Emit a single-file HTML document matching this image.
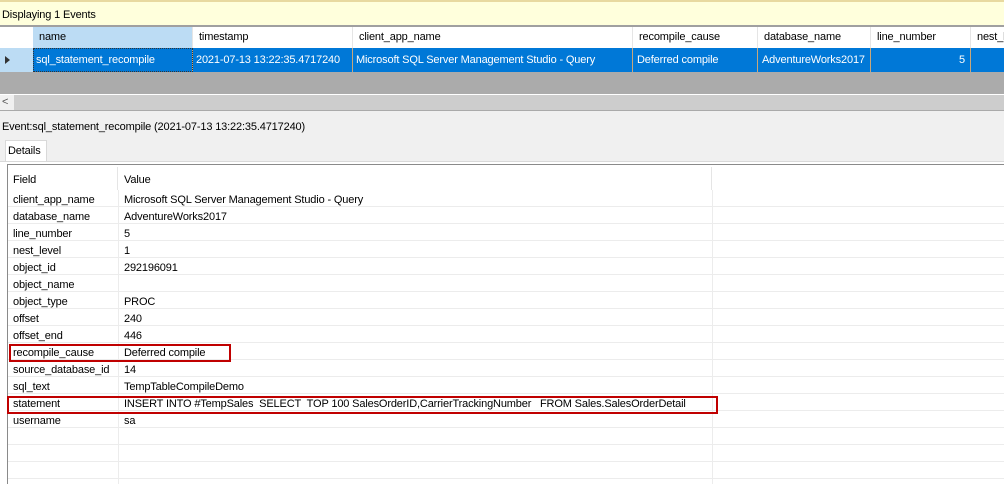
<!DOCTYPE html>
<html><head><style>
*{margin:0;padding:0;box-sizing:border-box}
body{width:1004px;height:484px;overflow:hidden;background:#f0f0f0;font-family:"Liberation Sans",Arial,sans-serif;font-size:11px;letter-spacing:-0.15px;color:#000;position:relative}
.a{position:absolute;white-space:nowrap}
.hc{position:absolute;top:27px;height:21px;line-height:21px;padding-left:6px;background:#fff;border-right:1px solid #e5e5e5;white-space:nowrap;overflow:hidden}
.rc{position:absolute;top:48px;height:24px;line-height:25px;padding-left:4px;background:#0078d7;color:#fff;border-right:1px solid #c8a77a;white-space:nowrap;overflow:hidden}
.row{position:absolute;left:8px;width:996px;height:17px;border-bottom:1px solid #ececec;line-height:21px}
.row span{position:absolute;white-space:nowrap}
.f{left:5px}.v{left:116px}
</style></head><body>
<div class="a" style="left:0;top:0;width:1004px;height:2px;background:#e8d9a0"></div>
<div class="a" style="left:0;top:2px;width:1004px;height:23px;background:#ffffdc;line-height:26px;padding-left:2px">Displaying 1 Events</div>
<div class="a" style="left:0;top:25px;width:1004px;height:2px;background:#a0a0a0"></div>
<div class="a" style="left:0;top:27px;width:33px;height:21px;background:#fff"></div>
<div class="hc" style="left:33px;width:160px;background:#bcdcf4">name</div>
<div class="hc" style="left:193px;width:160px">timestamp</div>
<div class="hc" style="left:353px;width:280px">client_app_name</div>
<div class="hc" style="left:633px;width:125px">recompile_cause</div>
<div class="hc" style="left:758px;width:113px">database_name</div>
<div class="hc" style="left:871px;width:100px">line_number</div>
<div class="hc" style="left:971px;width:40px">nest_level</div>
<div class="a" style="left:0;top:48px;width:33px;height:24px;background:#bcdcf4"></div>
<svg class="a" style="left:4px;top:55px" width="8" height="10"><path d="M1 1 L6 5 L1 9Z" fill="#333"/></svg>
<div class="rc" style="left:33px;width:160px;outline:1px dotted #333;outline-offset:-1px;padding-left:3px">sql_statement_recompile</div>
<div class="rc" style="left:193px;width:160px;padding-left:3px">2021-07-13 13:22:35.4717240</div>
<div class="rc" style="left:353px;width:280px;padding-left:3px">Microsoft SQL Server Management Studio - Query</div>
<div class="rc" style="left:633px;width:125px">Deferred compile</div>
<div class="rc" style="left:758px;width:113px;padding-left:4px">AdventureWorks2017</div>
<div class="rc" style="left:871px;width:100px;text-align:right;padding-right:5px">5</div>
<div class="rc" style="left:971px;width:40px"></div>
<div class="a" style="left:0;top:72px;width:1004px;height:22px;background:#ababab"></div>
<div class="a" style="left:0;top:94px;width:1004px;height:17px;background:#cdcdcd;border-top:1px solid #fff;border-bottom:1px solid #aaa"></div>
<div class="a" style="left:0;top:95px;width:14px;height:15px;background:#f0f0f0;color:#555;line-height:15px;padding-left:2px;font-size:11px">&lt;</div>
<div class="a" style="left:2px;top:121px">Event:sql_statement_recompile (2021-07-13 13:22:35.4717240)</div>
<div class="a" style="left:5px;top:140px;width:42px;height:21px;background:#fff;border:1px solid #d9d9d9;border-bottom:none;padding-left:2px;line-height:21px">Details</div>
<div class="a" style="left:0;top:161px;width:1004px;height:323px;background:#fff;border-top:1px solid #d9d9d9"></div>
<div class="a" style="left:7px;top:164px;width:997px;height:320px;background:#fff;border-left:1px solid #8a8a8a;border-top:1px solid #8a8a8a"></div>
<div class="a" style="left:8px;top:165px;width:996px;height:25px;line-height:30px"><span class="a" style="left:5px">Field</span><span class="a" style="left:116px">Value</span></div>
<div class="a" style="left:117px;top:167px;width:1px;height:23px;background:#e5e5e5"></div>
<div class="a" style="left:711px;top:167px;width:1px;height:23px;background:#e5e5e5"></div>
<div class="a" style="left:118px;top:190px;width:1px;height:294px;background:#ececec"></div>
<div class="a" style="left:712px;top:190px;width:1px;height:294px;background:#ececec"></div>
<div class="row" style="top:190px"><span class="f">client_app_name</span><span class="v">Microsoft SQL Server Management Studio - Query</span></div>
<div class="row" style="top:207px"><span class="f">database_name</span><span class="v">AdventureWorks2017</span></div>
<div class="row" style="top:224px"><span class="f">line_number</span><span class="v">5</span></div>
<div class="row" style="top:241px"><span class="f">nest_level</span><span class="v">1</span></div>
<div class="row" style="top:258px"><span class="f">object_id</span><span class="v">292196091</span></div>
<div class="row" style="top:275px"><span class="f">object_name</span><span class="v"></span></div>
<div class="row" style="top:292px"><span class="f">object_type</span><span class="v">PROC</span></div>
<div class="row" style="top:309px"><span class="f">offset</span><span class="v">240</span></div>
<div class="row" style="top:326px"><span class="f">offset_end</span><span class="v">446</span></div>
<div class="row" style="top:343px"><span class="f">recompile_cause</span><span class="v">Deferred compile</span></div>
<div class="row" style="top:360px"><span class="f">source_database_id</span><span class="v">14</span></div>
<div class="row" style="top:377px"><span class="f">sql_text</span><span class="v">TempTableCompileDemo</span></div>
<div class="row" style="top:394px"><span class="f">statement</span><span class="v">INSERT INTO #TempSales&nbsp; SELECT&nbsp; TOP 100 SalesOrderID,CarrierTrackingNumber&nbsp;&nbsp; FROM Sales.SalesOrderDetail</span></div>
<div class="row" style="top:411px"><span class="f">username</span><span class="v">sa</span></div>
<div class="row" style="top:428px"></div>
<div class="row" style="top:445px"></div>
<div class="row" style="top:462px"></div>
<div class="a" style="left:9px;top:344px;width:222px;height:18px;border:2px solid #c00000"></div>
<div class="a" style="left:7px;top:396px;width:711px;height:18px;border:2px solid #c00000"></div>
</body></html>
